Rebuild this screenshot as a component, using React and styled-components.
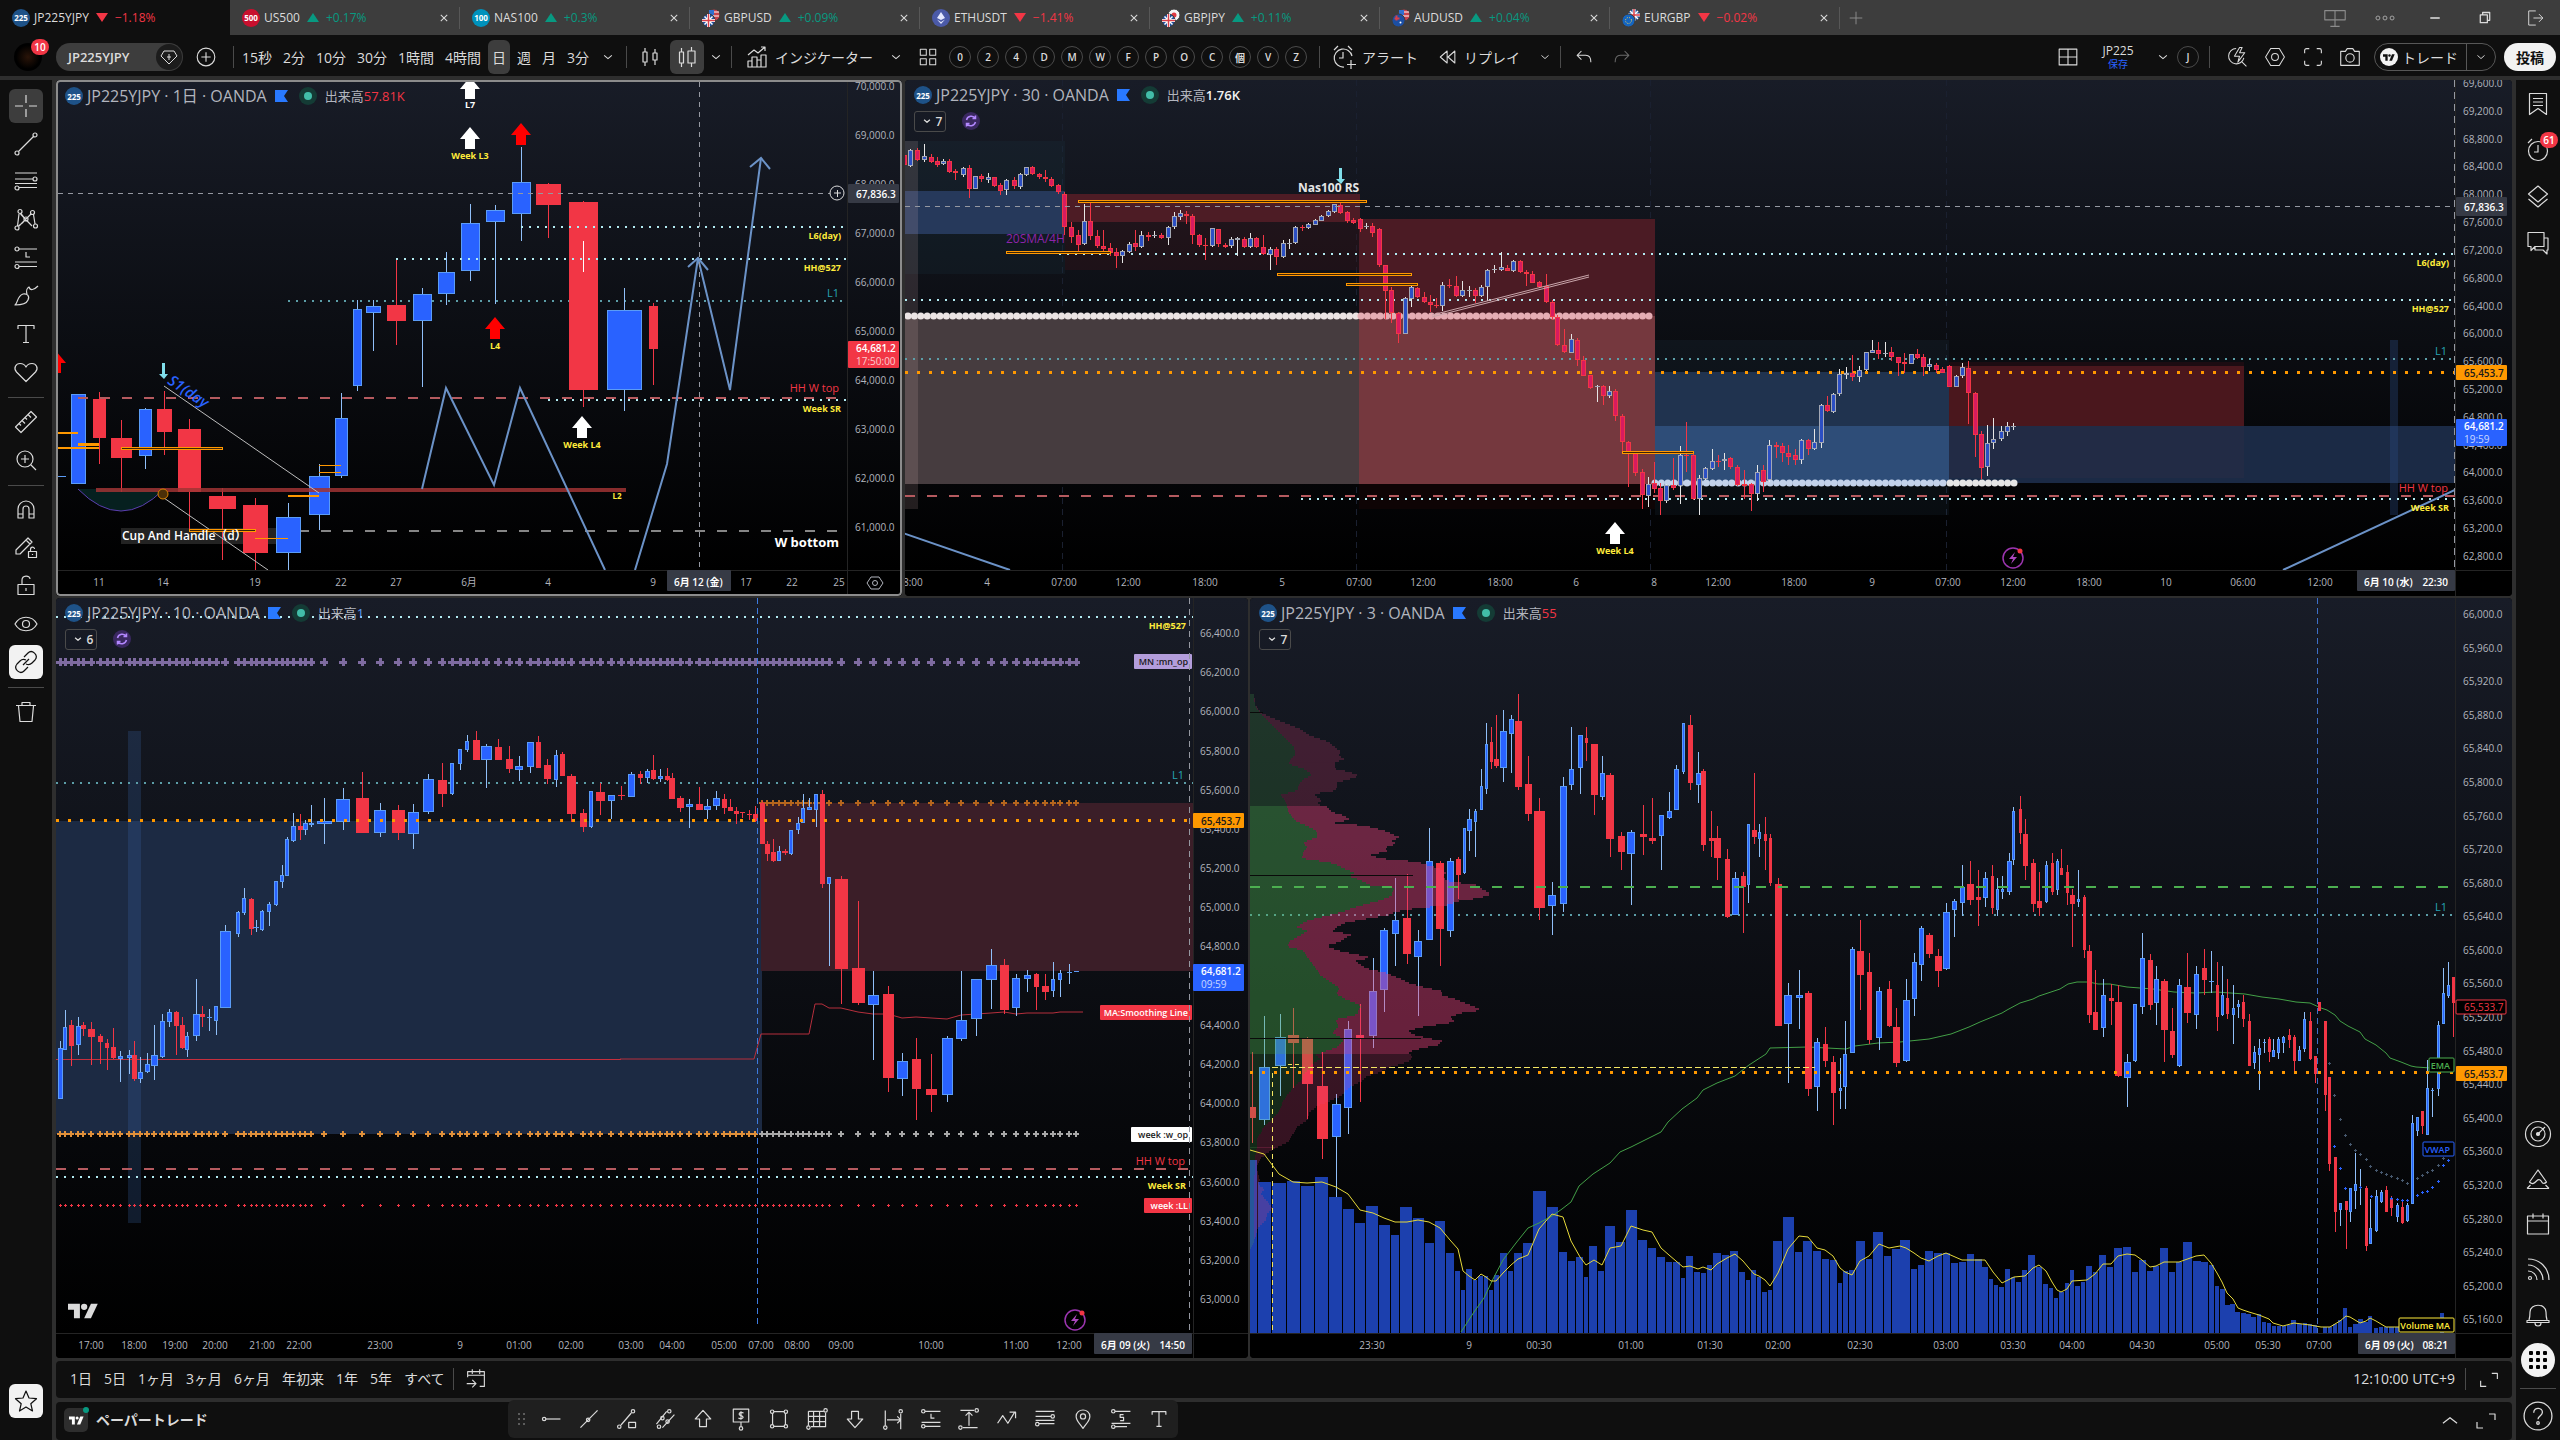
import React from "react";
import styled, { createGlobalStyle, css } from "styled-components";

const FONT = '"Open Sans", "Noto Sans", "Noto Sans CJK JP", sans-serif';
const C = {
  bar: "#0f0f0f", gap: "#2e2e2e", raised: "#3d3d3d", line: "#4a4a4a", text: "#dbdbdb",
  muted: "#b2b5be", up: "#2962ff", upEdge: "#5b9cf6", upWick: "#90bff9", down: "#f23645",
  orange: "#ff9800", yellow: "#ffeb3b", teal: "#26a6b5", dot: "#b2ebf2", dim: "#5c9ea8",
};

const Global = createGlobalStyle`
  * { box-sizing: border-box; }
  body { margin: 0; background: ${C.gap}; font-family: ${FONT}; color: ${C.text}; overflow: hidden; }
  button { font: inherit; color: inherit; background: none; border: 0; padding: 0; margin: 0; cursor: pointer; }
  h2, p { margin: 0; font-weight: 400; }
`;

/* ---------- icons ---------- */
const dot = (x, y) => <circle cx={x} cy={y} r="2" key={`${x}-${y}`} />;
const ICONS = {
  cross: <path d="M14 3v8M14 17v8M3 14h8M17 14h8" />,
  trend: <><path d="M6.5 21.5 21.5 6.5" />{dot(5, 23)}{dot(23, 5)}</>,
  fib: <><path d="M3 5h22M3 11h18M7 19.500h18M3 15.500h22" />{dot(23, 11)}{dot(5, 20)}</>,
  pattern: <><path d="M5.500 20 7 8M8.500 8 20 20M7 20 19 8M21.500 8.500l1.500 9.500M9 7.500l3.500 4.500M6.500 20l5-4" />{dot(8, 5.500)}{dot(5, 22)}{dot(20.500, 6.500)}{dot(23.500, 20)}{dot(14, 13)}</>,
  proj: <><path d="M7 5h18M14 8v5h4M3 18h22M7 22.500h18" />{dot(5, 5)}{dot(5, 22.500)}</>,
  shortp: <><path d="M7 5h18M17 9h-4v3h4v4h-4M3 19h22M7 23h14" />{dot(5, 5)}{dot(5, 23)}</>,
  brush: <path d="M3 23c3-2 2-9 8-11 4-1 7 2 5 6-2 5-9 5-13 5zM15 12c-1-3 0-6 2-7 1 4 5 3 9-1" />,
  text: <path d="M6 9V5.500h16V9M14 5.500v17M11 22.500h6" />,
  heart: <path d="M14 23.500 4.500 14C1 10 4 5.500 8 5.500c3 0 5 1.500 6 3.500 1-2 3-3.500 6-3.500 4 0 7 4.500 3.500 8.500z" />,
  ruler: <path d="M3.500 19 19 3.500l5.500 5.500L9 24.500zM7 15.500l2 2M10 12.500l3 3M13 9.500l2 2M16 6.500l3 3" />,
  zoomin: <path d="M13 5a8 8 0 1 1 0 16 8 8 0 0 1 0-16zM19 19l5 5M9 13h8M13 9v8" />,
  magnet: <path d="M6 22V13a8 8 0 0 1 16 0v9h-5v-9a3 3 0 0 0-6 0v9zM6 18h5M17 18h5" />,
  pencillock: <path d="M4 20v-4L16 4l4 4L8 20zM14 6l4 4M16.500 17.500h8v6h-8zM18.500 17.500v-2c0-3 4-3 4-.500M20.500 20v1" />,
  lock: <path d="M6 12.500h16v10H6zM10 12.500V8c0-5 8-5 8-1M14 16v3" />,
  eye: <><path d="M3 14c5-9 17-9 22 0-5 9-17 9-22 0z" /><circle cx="14" cy="14" r="3.500" /></>,
  link: <path d="M12 9l4-4c4-4 11 2 7 7l-3 3c-2 2-4 2-6 1M16 19l-4 4c-4 4-11-2-7-7l3-3c2-2 4-2 6-1M11 17l6-6" />,
  trash: <path d="M4 7.500h20M10 7V4.500h8V7M6.500 8l1.500 15.500h12L21.500 8" />,
  star: <path d="m14 4 3 7 7.500.700-5.700 5 1.700 7.300-6.500-4-6.500 4 1.700-7.300-5.700-5L11 11z" />,
  list: <path d="M5.500 3.500h17v21l-8.500-6-8.500 6zM9 8.500h10M9 12h10M9 15.500h10" />,
  clock: <><circle cx="14" cy="15" r="9.500" /><path d="M14 9v7h-4M4 7l4-4M20 3l4 4" /></>,
  layers: <path d="m14 4 9.500 8-9.500 8-9.500-8zM4.500 17l9.500 8 9.500-8" />,
  chat: <path d="M4 4.500h16v14h-9l-4 4v-4H4zM20 10h4v12h-1v4l-4-4h-8v-3" />,
  radar: <><circle cx="14" cy="14" r="12.500" /><circle cx="14" cy="14" r="7" /><circle cx="14" cy="14" r="1.500" fill="currentColor" /><path d="m15 13 6-6" /></>,
  peak: <path d="M3 23.500h22M6.500 20 3 23.500M21.500 20l3.500 3.500M14 5 5.500 17c3 3 5 1 7-1s4-2 6 2c2 1 3 0 4-1zM5.500 17" />,
  calendar: <path d="M3.500 6h21v18h-21zM3.500 11h21M9 3.500v5M19 3.500v5" />,
  feed: <><path d="M4 4c12 0 21 9 21 21M4 10c8 0 15 7 15 15M4 16c5 0 9 4 9 9" /><circle cx="6" cy="23" r="1.500" /></>,
  bell: <path d="M5 20c1-3 1-5 1-8 0-9 16-9 16 0 0 3 0 5 1 8M3 20.500h22v2H3zM11 23c0 4 6 4 6 0" />,
  help: <><circle cx="14" cy="14" r="13" /><path d="M10 11c0-6 9-5 8 0-.500 3-4 3-4 6" /><circle cx="14" cy="20.500" r="1.200" /></>,
  plus: <path d="M14 6v16M6 14h16" />,
  pluscircle: <><circle cx="14" cy="14" r="9.500" /><path d="M14 9v10M9 14h10" /></>,
  chevron: <path d="m9.500 12 4.500 4 4.500-4" />,
  chevup: <path d="m5 18 9-7 9 7" />,
  close: <path d="m9 9 10 10M19 9 9 19" />,
  bars: <path d="M7 9h4v10H7zM9 5v4M9 19v4M17 10h4v7h-4zM19 6v4M19 17v5" />,
  candle2: <path d="M6.500 9h4v11h-4zM8.500 5v4M8.500 20v4M15 8h7v12h-7zM18.500 4v4M18.500 20v4" />,
  indicator: <path d="M5 12l6-5 4 3 7-6M18 4h4v4M5 24v-6h4v-4h5v3h4v-5h5v12zM9 18v6M14 17v7M18 16v8" />,
  grid: <path d="M5 5h7v7H5zM16 5h7v7h-7zM5 16h7v7H5zM16 16h7v7h-7z" />,
  alert: <path d="M22 13a9 9 0 1 0-8 11M13 9v6H9M4 7l4-4M18 3l4 4M21 17v9M17 21.500h9" />,
  rewind: <path d="M13 7v14l-8-7zM22 7v14l-8-7z" />,
  undo: <path d="m11 7-5 5 5 5M6 12h10c4 0 6 3 6 8" />,
  redo: <path d="m17 7 5 5-5 5M22 12H12c-4 0-6 3-6 8" />,
  layout: <path d="M4.500 5.500h19v17h-19zM14 5.500v17M4.500 14h19" />,
  flashsearch: <path d="M13 4a9 9 0 1 0 9 11M20 20l5 5M17 3l-6 10h6l-2 7 8-11h-6l3-6z" />,
  hex: <><path d="M9 4h10l6 10-6 10H9L3 14z" /><circle cx="14" cy="14" r="4" /></>,
  full: <path d="M10 5H7a2 2 0 0 0-2 2v3M18 5h3a2 2 0 0 1 2 2v3M10 23H7a2 2 0 0 1-2-2v-3M18 23h3a2 2 0 0 0 2-2v-3" />,
  camera: <><path d="M4 8h5l2-3h6l2 3h5v15H4z" /><circle cx="14" cy="15" r="4.500" /></>,
  monitor: <path d="M3 6h22v10H3zM14 6v17M9 23h10" />,
  dots3: <><circle cx="5" cy="14" r="2.500" /><circle cx="14" cy="14" r="2.500" /><circle cx="23" cy="14" r="2.500" /></>,
  minus: <path d="M8 14h12" strokeWidth="2" />,
  restore: <path d="M8 10h9v10H8zM11 10V7h9v10h-3" />,
  exit: <path d="M15 5H6v18h9M12 14h12M19 9l5 5-5 5" />,
  expand: <path d="M17 8h6v6M5 16v6h6" />,
  goto: <path d="M5 12V6h18v16h-5M5 10h18M10 3.500v5M18 3.500v5M4 19h10M10 15l4 4-4 4" />,
  hray: <><path d="M8 14h17" />{dot(6, 14)}</>,
  line2: <><path d="M4 24 24 4" />{dot(13, 15)}</>,
  rotbox: <><path d="M7 21 19 7M16 18h8v6h-8z" />{dot(5, 23)}{dot(21, 5)}</>,
  channel: <><path d="M4 20 16 5M11 24 25 9" />{dot(19, 5)}{dot(7, 23)}{dot(11, 13)}{dot(17, 17)}</>,
  up: <path d="m14 4 9 10h-5v9h-8v-9H5z" />,
  down: <path d="m14 24 9-10h-5V5h-8v9H5z" />,
  note: <><path d="M5 2.500h18v15H5zM17 7c-5-2-7 2-3 3s3 5-3 3M14 5v10M14 17.500v5" />{dot(14, 25)}</>,
  rect: <><path d="M6.500 8v12M21.500 8v12M8 5.500h12M8 22.500h12" />{dot(6, 5.500)}{dot(22, 5.500)}{dot(6, 22.500)}{dot(22, 22.500)}</>,
  table: <><path d="M4 5h18M4 5v17M7 23h17V7M4 11h20M4 17h20M10 5v18M17 5v18" />{dot(24, 4)}{dot(4, 24)}</>,
  hrange: <><path d="M5 4v18M23 8v18M7 15h16M19 11l4 4-4 4" />{dot(5, 24)}{dot(23, 5)}</>,
  vrange: <><path d="M7 24h17M4 4h16M14 6v16M10 10l4-4 4 4" />{dot(4, 24)}{dot(23, 4)}</>,
  zig: <path d="m3 19 6-9 6 9 8-13M17 6h7v7" />,
  pin: <><path d="M14 25c-4-6-8-9-8-14 0-10 16-10 16 0 0 5-4 8-8 14z" /><circle cx="14" cy="11" r="3" /></>,
};
const IconSvg = styled.svg.attrs({ viewBox: "0 0 28 28", "aria-hidden": true })`
  width: ${(p) => p.$s}px; height: ${(p) => p.$s}px; flex: none; display: block;
  fill: none; stroke: currentColor; stroke-width: ${(p) => p.$w || 1.2}; stroke-linejoin: round;
`;
const Icon = ({ n, s = 28, w }) => <IconSvg $s={s} $w={w}>{ICONS[n]}</IconSvg>;

const TvLogo = ({ w = 30, color = "#dbdbdb" }) => (
  <svg width={w} height={Math.round(w * 0.6)} viewBox="0 0 36 21" fill={color} aria-hidden="true">
    <path d="M0 1h14v19H7V8H0z" /><circle cx="19.500" cy="4.500" r="3.700" /><path d="M27 1h8l-8 19h-8z" />
  </svg>
);

/* ---------- tab strip ---------- */
const Tabs = styled.nav`display: flex; height: 35px; background: ${C.raised};`;
const Tab = styled.div`
  width: 230px; display: flex; align-items: center; gap: 4px; padding: 0 6px 0 12px; font-size: 12px; color: ${C.text};
  background: ${(p) => (p.$on ? C.bar : "transparent")};
  position: relative;
  ${(p) => (p.$on ? "" : css`&::after { content: ""; position: absolute; right: 0; top: 7px; height: 22px; width: 1px; background: #575757; }`)}
`;
const TabLink = styled.a`display: flex; align-items: center; gap: 4px; flex: 1; color: inherit; text-decoration: none; white-space: nowrap;`;
const Pct = styled.span`color: ${(p) => (p.$up ? "#089981" : C.down)};`;
const Tri = styled.span`
  width: 0; height: 0; border: 6px solid transparent; margin: 0 3px;
  ${(p) => (p.$up ? "border-bottom: 9px solid #089981; border-top: 0;" : `border-top: 9px solid ${C.down}; border-bottom: 0;`)}
`;
const Coin = styled.span`
  width: 18px; height: 18px; border-radius: 9px; flex: none; display: grid; place-items: center; color: #fff;
  font-size: 8px; font-weight: 700; background: ${(p) => p.$bg};
`;
const flagColors = {
  GB: ["#1f4f9c", "#d8404a", "#fff"], US: ["#c8414b", "#2f6fd0", "#fff"], JP: ["#f5f5f5", "#e03a44", "#f5f5f5"],
  AU: ["#1c4fa3", "#d8404a", "#fff"], EU: ["#1565c0", "#ffd54f", "#1565c0"],
};
const Flag = ({ c, x, y, r }) => {
  const [bg, a, b] = flagColors[c];
  return (
    <g>
      <circle cx={x} cy={y} r={r} fill={bg} stroke={C.raised} />
      {c === "GB" && <><path d={`M${x - 4} ${y - 4}l8 8m0-8-8 8`} stroke={b} strokeWidth="1.500" /><path d={`M${x} ${y - r}v${2 * r}M${x - r} ${y}h${2 * r}`} stroke={b} strokeWidth="3" /><path d={`M${x} ${y - r}v${2 * r}M${x - r} ${y}h${2 * r}`} stroke={a} strokeWidth="1.500" /></>}
      {c === "US" && <><path d={`M${x - 5} ${y - 3}h10M${x - 5} ${y + 1}h10`} stroke={b} /><rect x={x - 5} y={y - 5} width="5" height="5" fill={a} /></>}
      {c === "JP" && <circle cx={x} cy={y} r="2.500" fill={a} />}
      {c === "AU" && <><path d={`M${x - 4} ${y - 2}h5M${x - 2} ${y - 5}v5`} stroke={a} strokeWidth="2" /><circle cx={x + 2} cy={y + 2} r="1" fill={b} /></>}
      {c === "EU" && <circle cx={x} cy={y} r="3" fill="none" stroke={a} strokeDasharray="1 1.400" />}
    </g>
  );
};
const Pair = ({ a, b }) => (
  <svg width="18" height="18" viewBox="0 0 18 18" aria-hidden="true"><Flag c={b} x={12} y={6} r={6} /><Flag c={a} x={6.500} y={11.500} r={6.500} /></svg>
);
const Spacer = styled.div`flex: 1;`;
const StripBtn = styled.button`width: ${(p) => p.$w || 50}px; display: grid; place-items: center; color: ${(p) => p.$c || C.text};`;
const tabs = [
  ["JP225YJPY", "−1.18%", 0, <Coin $bg="#1e5288">225</Coin>],
  ["US500", "+0.17%", 1, <Coin $bg="#c8102e">500</Coin>],
  ["NAS100", "+0.3%", 1, <Coin $bg="#0092bc">100</Coin>],
  ["GBPUSD", "+0.09%", 1, <Pair a="GB" b="US" />],
  ["ETHUSDT", "−1.41%", 0, <Coin $bg="#4b5aa8"><svg width="8" height="12" viewBox="0 0 8 12"><path d="m4 0 4 6-4 2-4-2zM0 7.500 4 10l4-2.500L4 12z" fill="#e4e8ff" /></svg></Coin>],
  ["GBPJPY", "+0.11%", 1, <Pair a="GB" b="JP" />],
  ["AUDUSD", "+0.04%", 1, <Pair a="AU" b="US" />],
  ["EURGBP", "−0.02%", 0, <Pair a="EU" b="GB" />],
];

/* ---------- top toolbar ---------- */
const Bar = styled.header`
  height: 41px; display: flex; align-items: center; background: ${C.bar}; font-size: 14px; white-space: nowrap; padding: 3px 4px 0 0;
`;
const Sep = styled.span`width: 1px; height: 22px; background: ${C.line}; margin: 0 ${(p) => p.$m || 6}px; flex: none;`;
const Avatar = styled.div`
  width: 56px; height: 40px; position: relative; display: grid; place-items: center;
  &::before { content: ""; width: 28px; height: 28px; border-radius: 14px; background: radial-gradient(#2a1408, #000 60%); }
`;
const Badge = styled.b`
  position: absolute; top: ${(p) => p.$t}px; right: ${(p) => p.$r}px; min-width: 18px; height: 16px; padding: 0 3px; border-radius: 8px;
  background: ${C.down}; color: #fff; font-size: 10px; font-weight: 600; line-height: 16px; text-align: center;
`;
const Symbol = styled.button`
  height: 28px; width: 127px; border-radius: 14px; background: ${C.raised}; display: flex; align-items: center; justify-content: space-between;
  padding: 0 1px 0 12px; font-weight: 600; font-size: 13px;
  & > span { width: 26px; height: 26px; border-radius: 13px; background: #1c1c1c; display: grid; place-items: center; }
`;
const Tool = styled.button`
  height: 34px; min-width: ${(p) => p.$w || 0}px; padding: 0 ${(p) => p.$p || 0}px; border-radius: 6px; display: flex; align-items: center; justify-content: center;
  gap: 4px; color: ${(p) => p.$c || C.text}; background: ${(p) => (p.$on ? C.raised : "none")};
`;
const Intervals = styled.div`display: flex; gap: 3px; font-size: 14px;`;
const Round = styled.button`
  width: 22px; height: 22px; border-radius: 11px; border: 1px solid #4a4a4a; font-size: 10px; font-weight: 600; display: grid; place-items: center; flex: none;
`;
const Rounds = styled.div`display: flex; gap: 6px; padding: 0 6px 0 4px;`;
const Saved = styled.div`text-align: center; font-size: 12px; line-height: 14px; width: 62px; & small { display: block; font-size: 10px; line-height: 12px; color: ${C.up}; }`;
const Trade = styled.div`
  height: 28px; width: 122px; border: 1px solid #575757; border-radius: 14px; display: flex; align-items: center; margin: 0 8px 0 4px;
  button { display: flex; align-items: center; justify-content: center; gap: 4px; height: 26px; }
  button:first-child { flex: 1; justify-content: flex-start; padding-left: 5px; border-right: 1px solid #575757; }
  button:last-child { width: 28px; }
`;
const Disc = styled.span`width: 18px; height: 18px; border-radius: 9px; background: #f2f2f2; display: grid; place-items: center;`;
const Post = styled.button`height: 28px; width: 52px; border-radius: 14px; background: #f2f2f2; color: #0f0f0f; font-weight: 600;`;

/* ---------- body frame ---------- */
const Page = styled.div`display: flex; flex-direction: column; height: 100vh; min-height: 900px;`;
const Body = styled.div`display: grid; grid-template-columns: 52px minmax(0, 1fr) 44px; gap: 4px; flex: 1; min-height: 0; padding-top: 4px;`;
const Side = styled.aside`background: ${C.bar}; display: flex; flex-direction: column; align-items: center; padding: ${(p) => p.$pad}; min-height: 0;`;
const SideBtn = styled.button`
  width: 34px; height: ${(p) => p.$h || 38}px; display: grid; place-items: center; position: relative; flex: none;
  & > span {
    width: 34px; height: 34px; border-radius: ${(p) => (p.$disc ? 17 : 6)}px; display: grid; place-items: center;
    background: ${(p) => (p.$lit ? "#f2f2f2" : p.$on ? C.raised : "none")}; color: ${(p) => (p.$lit ? "#0f0f0f" : C.text)};
  }
`;
const SideLine = styled.hr`width: 36px; height: 1px; border: 0; background: ${C.line}; margin: ${(p) => p.$m || 6}px 0; margin-bottom: ${(p) => (p.$m || 6) - 1}px; flex: none;`;
const Center = styled.main`display: flex; flex-direction: column; gap: 4px; min-width: 0; min-height: 0;`;
const Charts = styled.div`flex: 1; display: grid; grid-template-rows: 516fr 760fr; gap: 2px; min-height: 0; margin-bottom: -1px;`;
const Row = styled.div`display: grid; grid-template-columns: ${(p) => p.$cols}; gap: ${(p) => p.$gap}px; min-height: 0;`;
const Panel = styled.section`
  position: relative; min-width: 0; min-height: 0; border-radius: 4px; overflow: hidden; background: #000;
  ${(p) => (p.$on ? css`&::after { content: ""; position: absolute; inset: 0; border: 2px solid #8c8c8c; border-radius: 4px; pointer-events: none; }` : "")}
`;
const Plot = styled.svg.attrs({ preserveAspectRatio: "none" })`position: absolute; inset: 0; width: 100%; height: 100%; display: block; font-family: ${FONT};`;
const Legend = styled.div`position: absolute; left: 9px; top: ${(p) => p.$t}px; display: grid; gap: 6px;`;
const LegendRow = styled.div`display: flex; align-items: center; height: 20px; white-space: nowrap;`;
const Title = styled.h2`font-size: 16px; line-height: 20px; color: ${C.muted}; margin: 0 8px 0 4px;`;
const Live = styled.span`width: 18px; height: 18px; border-radius: 9px; background: #143b35; display: grid; place-items: center; margin: 0 8px 0 11px; &::after { content: ""; width: 8px; height: 8px; border-radius: 4px; background: #42bda8; }`;
const Vol = styled.p`font-size: 13px; line-height: 18px; color: ${C.muted}; & b { font-weight: ${(p) => (p.$bold ? 600 : 400)}; color: ${(p) => p.$c}; }`;
const Count = styled.button`width: 32px; height: 21px; border: 1px solid ${C.line}; border-radius: 3px; display: flex; align-items: center; justify-content: center; font-size: 12px; font-weight: 600;`;
const Sync = styled.span`width: 18px; height: 18px; border-radius: 9px; background: #3a2860; color: #b388ff; display: grid; place-items: center; margin-left: 16px;`;

const Footer = styled.div`height: ${(p) => p.$h}px; background: ${C.bar}; border-radius: 4px; display: flex; align-items: center; font-size: 14px; line-height: 20px; padding: 0 10px 2px 8px; flex: none; white-space: nowrap;`;
const Ranges = styled.div`display: flex; gap: 12px; padding: 0 4px 0 6px;`;
const Paper = styled.button`display: flex; align-items: center; gap: 8px; font-weight: 600; position: relative;`;
const PaperLogo = styled.span`width: 24px; height: 24px; border-radius: 5px; background: ${C.gap}; display: grid; place-items: center; position: relative; &::after { content: ""; position: absolute; right: -1px; top: -1px; width: 6px; height: 6px; border-radius: 3px; background: #089981; }`;
const Float = styled.div`
  position: absolute; left: 508px; bottom: 2px; height: 38px; width: 670px; border-radius: 6px; background: #1f1f1f; display: flex; align-items: center; padding-left: 4px;
  button { width: 38px; height: 38px; display: grid; place-items: center; }
`;
const Grip = styled.span`width: 20px; height: 14px; background: radial-gradient(circle at 2px 2px, #5c5c5c 1px, transparent 1px) 5px 0 / 5px 5px repeat; clip-path: inset(0 5px 0 5px);`;

/* ---------- chart primitives ---------- */
/* maps sheet units to panel pixels: origin plus units per pixel on each axis */
const sheet = (x0, y0, kx, ky) => ({ x: (v) => Math.round(x0 + v / kx), y: (v) => Math.round(y0 + v / ky), k: kx });
const S1 = sheet(0, 80, 1.7231, 3);
const S2 = sheet(900, 80, 1.8233, 3);
const S2b = sheet(1700, 80, 1.8233, 3);
const S3 = sheet(0, 600, 2.45, 2.0632);
const S3b = sheet(620, 600, 2.45, 2.0632);
const S4 = sheet(1240, 600, 2.3758, 2.0632);
const S4b = sheet(1900, 600, 2.3758, 2.0632);

/* candle record: centre, width, body top, body bottom, high, low, direction */
const candles = (s, src, w0) =>
  src.trim().split(/[;\n]+/).map((r) => r.trim()).filter(Boolean).map((r) => {
    const p = r.split(/\s+/);
    if (w0) p.splice(1, 0, w0);
    const cx = s.x(+p[0]);
    return { cx, w: Math.max(3, Math.round(+p[1] / s.k)), t: s.y(+p[2]), b: s.y(+p[3]), h: s.y(+p[4]), l: s.y(+p[5]), up: p[6] === "b" };
  });
const themes = {
  plain: { up: C.up, upEdge: C.upEdge, upWick: C.upWick, down: C.down, downEdge: C.down, downWick: C.down },
  night: { up: "#2c4fc4", upEdge: "#a3a8b5", upWick: "#e6e6e6", down: "#d81b60", downEdge: C.down, downWick: C.down },
};
const Candles = ({ data, theme = "plain" }) => {
  const t = themes[theme];
  return (
    <g shapeRendering="crispEdges">
      {data.map((c, i) => {
        const x = c.cx - Math.floor(c.w / 2);
        const h = Math.max(1, c.b - c.t);
        return (
          <g key={i}>
            <rect x={c.cx} y={c.h} width="1" height={Math.max(1, c.l - c.h)} fill={c.up ? t.upWick : t.downWick} />
            <rect x={x} y={c.t} width={c.w} height={h} fill={c.up ? t.upEdge : t.downEdge} />
            {c.w > 2 && h > 2 && <rect x={x + 1} y={c.t + 1} width={c.w - 2} height={h - 2} fill={c.up ? t.up : t.down} />}
          </g>
        );
      })}
    </g>
  );
};
const poly = (s, src) => src.trim().split(/\s+/).map((p) => { const [a, b] = p.split(","); return `${s.x(+a)},${s.y(+b)}`; }).join(" ");
const H = ({ x1, x2, y, c, d, w = 1, o }) => <line x1={x1} x2={x2} y1={y + (w % 2 ? 0.5 : 0)} y2={y + (w % 2 ? 0.5 : 0)} stroke={c} strokeWidth={w} strokeDasharray={d} opacity={o} />;
const V = ({ x, y1, y2, c, d }) => <line x1={x + 0.5} x2={x + 0.5} y1={y1} y2={y2} stroke={c} strokeDasharray={d} />;
const Box = ({ x1, y1, x2, y2, f, o, st }) => <rect x={x1} y={y1} width={x2 - x1} height={y2 - y1} fill={f} opacity={o} stroke={st} shapeRendering="crispEdges" />;
const Band = ({ x1, x2, y }) => <rect x={x1 + 0.5} y={y + 0.5} width={x2 - x1} height="2" fill="#3a2408" stroke={C.orange} />;
const Cross = ({ x, y, r, w, c }) => <path d={`M${x - r} ${y}h${2 * r}M${x} ${y - r}v${2 * r}`} stroke={c} strokeWidth={w} shapeRendering="crispEdges" />;

const Tick = styled.text`font-size: 10px; fill: #b2b5be; text-anchor: ${(p) => p.$a || "start"}; dominant-baseline: central;`;
const Note = styled.text`
  font-size: ${(p) => p.$s || 9}px; font-weight: ${(p) => p.$w || 700}; fill: ${(p) => p.$c || C.yellow}; font-style: ${(p) => (p.$i ? "italic" : "normal")};
  text-anchor: ${(p) => p.$a || "end"}; dominant-baseline: central;
`;
const Arrow = ({ x, y, c }) => <path d={`M${x} ${y}l10 12h-5v10h-10v-10h-5z`} fill={c} />;
const CyanArrow = ({ x, y }) => <path d={`M${x - 1} ${y}h3v11h3l-4 5-5-5h3z`} fill="#80deea" />;
const TimeTicks = ({ s, y, src }) => src.split(" ").map((t, i) => { const [l, x] = t.split("@"); return <Tick key={i} $a="middle" x={s.x(+x)} y={y}>{l}</Tick>; });
const PriceTicks = ({ x, y, step, from, by, n }) =>
  Array.from({ length: n }, (_, i) => <Tick key={i} x={x} y={Math.round(y + step * i)}>{(from - by * i).toLocaleString("en-US")}.0</Tick>);
const AxisTag = ({ x, y, w, h, f, lines, c = "#fff", st }) => (
  <g>
    <rect x={x} y={y} width={w} height={h} rx="1" fill={f} stroke={st} />
    {lines.map((l, i) => <Note key={l} $a="start" $s={10} $w={st || i ? 400 : 600} $c={i ? "#ffffffc0" : c} x={x + 8} y={Math.round(y + (h / lines.length) * (i + 0.5))}>{l}</Note>)}
  </g>
);
const TimeTag = ({ x, y, w, a, b }) => (
  <g>
    <rect x={x} y={y} width={w} height="21" rx="1" fill="#363a45" />
    <Note $a="start" $s={10} $w={600} $c="#fff" x={x + 7} y={y + 12}>{a}</Note>
    {b && <Note $s={10} $w={600} $c="#fff" x={x + w - 7} y={y + 12}>{b}</Note>}
  </g>
);
const Tag = ({ x2, y, w, f, c, st, children }) => (
  <g><rect x={x2 - w} y={y} width={w} height={st ? 14 : 15} rx="1" fill={f} stroke={st} /><Note $s={9} $w={600} $c={c} x={x2 - 4} y={y + 7}>{children}</Note></g>
);
const Flash = ({ x, y }) => (
  <g><circle cx={x} cy={y} r="10" fill="#000" stroke="#9c35b0" strokeWidth="1.500" /><path d={`M${x + 2} ${y - 6}l-6 7h4l-2 5 6-7h-4z`} fill="#ab47bc" /><circle cx={x + 7} cy={y - 7} r="2.500" fill={C.down} /></g>
);
const Ground = ({ id, x, y, w, h, axisX, axisY }) => (
  <g>
    <defs><linearGradient id={id} x1="0" x2="0" y1="0" y2="1"><stop offset="0" stopColor="#181c27" /><stop offset="1" stopColor="#000" /></linearGradient></defs>
    <rect x={x} y={y} width={w} height={axisY - y} fill={`url(#${id})`} />
    <rect x={x} y={axisY} width={w} height={y + h - axisY} fill="#000" />
    <H x1={x} x2={x + w} y={axisY} c="#242424" /><V x={axisX} y1={y} y2={y + h} c="#242424" />
  </g>
);

/* ---------- data ---------- */
const day = candles(S1, `135 26 942 1211 942 1211 b;170 22 957 1074 936 1152 r;209 36 1074 1134 1020 1236 r;249 22 987 1128 984 1167 b;282 26 987 1056 933 1125 r
325 40 1047 1236 1017 1353 r;382 47 1248 1287 1224 1440 r;440 43 1275 1418 1254 1470 r;497 43 1311 1418 1269 1470 b;549 36 1188 1305 1152 1350 b
588 23 1014 1187 939 1194 b;616 16 687 917 660 933 b;643 25 678 699 660 813 b;683 33 675 723 537 795 r;728 32 642 722 624 921 b
769 30 576 641 516 675 b;810 33 429 573 372 603 b;853 33 390 426 375 672 b;897 33 306 402 201 483 b;945 43 312 375 309 474 r
1004 50 366 930 363 981 r;1076 60 690 930 624 993 b;1126 16 678 807 669 915 r`);

const half = [
  ...candles(S2, `7 225 255 222 257 r;19 210 258 207 261 b;31 210 240 204 243 r;43 229 239 192 246 b;56 230 245 222 249 r;67 244 255 231 261 r;78 243 253 237 256 b;90 243 276 238 278 r;101 274 280 268 300 r
114 264 285 262 292 b;125 265 326 255 354 r;136 289 326 288 327 b;148 289 298 283 305 r;160 292 299 280 310 b;172 291 317 290 320 r;183 316 332 310 345 r;194 301 331 296 345 b;207 300 319 292 327 r;218 283 320 279 326 b
230 262 285 261 287 b;241 262 283 258 286 r;253 283 292 280 298 r;265 292 298 270 305 r;276 298 317 290 320 r;288 316 335 312 342 r;299 343 440 335 465 r;312 440 470 426 490 r;324 466 494 450 520 r;335 423 493 372 496 b
347 423 469 368 480 r;359 469 497 450 505 r;371 497 507 450 515 r;382 503 520 490 527 r;393 515 527 505 564 r;405 514 527 510 549 b;417 492 515 486 520 b;429 490 500 450 513 r;440 466 500 452 503 b;452 466 470 455 483 r
464 465 468 452 475 b;476 466 475 458 478 r;488 441 473 438 496 b;499 409 440 396 448 b;510 400 412 391 420 b;522 402 409 393 432 r;533 409 466 402 492 r;545 464 496 462 500 r;557 494 497 475 540 r;568 445 497 443 500 b
580 447 493 446 500 r;592 494 501 490 505 r;604 477 499 470 503 b;615 475 479 470 528 b;627 478 500 470 504 r;639 474 501 458 503 b;650 474 500 470 505 r;662 500 521 465 524 r;674 508 525 502 570 b;686 508 530 501 555 r
698 488 530 480 533 b;709 488 490 476 507 b;721 442 490 438 493 b;733 440 444 436 452 r;744 433 445 430 448 b;756 421 434 418 436 b;768 408 422 405 424 b;780 393 409 390 412 b;791 373 395 371 398 b;803 374 399 370 402 r
815 396 424 393 430 r;826 419 429 415 431 r;838 417 446 414 455 r;849 438 441 430 447 b;861 438 458 430 471 r;873 447 556 444 560 r;884 556 632 554 716 r;896 630 700 620 730 r;908 700 761 697 789 r;920 655 761 650 763 b
931 622 656 612 680 b;943 624 652 620 655 r;955 652 667 637 670 r;966 665 676 645 697 r;978 676 679 655 683 r;989 615 679 606 692 b;1001 615 619 597 625 r;1013 618 647 588 652 r;1024 631 647 603 650 b;1037 629 633 617 652 b
1048 630 647 625 670 r;1060 621 647 615 650 b;1071 571 622 568 663 b;1083 568 571 556 580 b;1095 562 569 516 572 b;1106 563 572 555 574 r;1118 542 573 540 577 b;1130 543 577 540 580 r;1141 576 583 570 618 r;1153 582 608 573 610 r
1165 606 622 602 625 r;1177 618 667 583 670 r;1188 667 710 660 720 r;1198 710 796 704 798 r;1211 796 817 747 820 r;1223 778 818 762 820 b;1235 779 841 775 858 r;1246 841 887 828 889 r;1258 886 923 884 926 r;1270 919 922 915 966 b
1281 919 947 915 975 r;1293 934 947 919 954 b;1304 934 1009 928 1023 r;1317 1009 1085 1002 1120 r;1328 1085 1119 1083 1220 r;1340 1119 1179 1113 1187 r;1352 1177 1244 1168 1286 r;1363 1213 1247 1190 1280 b;1375 1208 1226 1145 1238 r
1386 1224 1262 1210 1305 r;1397 1215 1262 1212 1270 b;1410 1215 1225 1134 1230 r;1422 1126 1218 1098 1272 b;1434 1124 1129 1026 1175 r;1445 1126 1257 1118 1260 r;1456 1194 1256 1185 1305 b;1468 1164 1196 1160 1200 b
1480 1143 1166 1108 1170 b;1492 1142 1147 1124 1162 r;1503 1137 1144 1120 1170 b;1514 1134 1162 1130 1166 r;1527 1160 1215 1156 1218 r;1538 1213 1217 1170 1257 r;1551 1213 1242 1208 1293 r;1562 1176 1242 1155 1262 b`, "9"),
  ...candles(S2b, `115 1171 1206 1155 1236 r;126 1095 1200 1080 1206 b;138 1096 1100 1086 1134 r;150 1099 1119 1090 1145 r;161 1119 1131 1095 1155 r;174 1125 1140 1108 1155 r;185 1080 1140 1077 1152 b;197 1081 1108 1078 1126 r
208 1087 1107 1047 1110 b;220 975 1090 972 1104 b;232 975 993 948 997 r;243 941 996 938 998 b;254 881 942 866 948 b;267 880 884 862 898 b;278 879 891 825 903 r;290 869 890 857 906 b;302 817 870 815 872 b;313 811 818 780 820 b
325 811 821 787 838 r;337 819 821 785 832 b;349 816 832 800 842 r;361 832 849 830 887 r;372 847 852 820 880 r;384 823 851 821 853 b;395 822 833 806 838 r;407 831 861 822 888 r;418 853 861 838 873 b;430 855 869 848 880 r
442 867 878 860 880 r;454 858 920 855 922 r;466 888 920 885 922 b;477 862 888 850 893 b;489 864 938 843 1032 r;501 940 1064 937 1131 r;512 1063 1163 1054 1197 r;524 1090 1162 1035 1188 b;535 1077 1088 1014 1107 b
548 1053 1077 1037 1083 b;559 1038 1055 1026 1068 b;570 1038 1040 1028 1050 b`, "9"),
];

const ten = [
  ...candles(S3, `146 12 924 1029 910 1029 b;160 11 880 929 846 929 b;175 12 877 920 867 961 r;190 12 878 918 860 939 b;204 12 877 885 870 900 r;224 16 885 902 870 959 r;244 12 900 912 895 957 r;261 11 914 924 906 970 r;278 12 922 945 883 948 r
295 12 941 947 930 994 b;315 12 939 945 928 978 b;329 12 939 988 910 992 r;344 12 974 988 943 997 b;359 12 957 974 935 975 b;378 16 939 961 877 990 b;398 12 869 943 854 944 b;413 12 850 871 844 880 b;430 12 850 879 848 939 r
445 12 877 925 861 926 r;459 11 900 928 891 943 b;479 18 854 900 782 910 b;496 12 854 860 838 880 r;513 12 861 863 844 889 b;528 11 838 869 838 897 b;552 26 683 842 671 842 b;582 11 644 689 642 695 b;599 11 615 646 594 650 b
614 12 617 679 615 691 r;628 14 675 677 660 686 b;643 11 642 681 639 683 b;660 11 627 644 623 673 b;675 11 580 629 580 631 b;690 11 567 582 547 594 b;704 11 493 569 489 570 b;719 12 466 497 439 499 b;734 12 466 475 442 495 r
748 12 461 474 454 485 b;763 12 460 465 423 468 b;795 36 456 463 409 503 b;841 35 411 459 388 474 b;888 32 409 481 355 481 r;932 30 433 481 419 489 b;974 32 433 481 423 495 r;1013 26 437 483 421 514 b;1049 26 369 437 359 442 b
1082 22 371 400 336 427 r;1108 11 336 400 336 402 b;1126 11 307 338 307 351 b;1143 11 291 309 279 314 b;1165 17 289 330 270 331 r;1191 26 301 330 297 388 b;1221 17 303 330 287 330 r;1246 17 328 349 301 356 r;1272 20 342 350 322 374 b
1299 16 293 345 293 357 b;1319 12 293 347 281 347 r;1341 17 340 369 328 380 r;1361 11 320 371 309 386 b;1378 12 318 363 314 363 r;1400 22 363 442 359 458 r;1429 17 439 468 431 479 r;1449 11 394 468 394 470 b;1471 22 396 415 378 444 r
1498 16 402 415 402 452 b;1522 16 402 404 384 413 r;1545 16 359 406 355 406 b`),
  ...candles(S3b, `48 12 359 367 353 380 r;65 12 353 367 349 377 b;82 12 351 369 320 371 r;99 12 363 369 349 375 b;114 12 363 372 347 374 r;128 14 367 411 357 411 r;148 16 409 429 404 437 r;170 16 421 427 411 470 b;193 16 421 433 386 433 r
214 16 425 433 411 452 b;236 16 409 425 394 434 b;256 12 411 429 400 441 r;270 12 427 435 411 436 r;285 12 435 442 427 462 r;300 12 437 439 437 450 r;315 12 441 443 433 454 r;330 12 442 456 425 458 r;347 12 419 503 415 503 r
361 12 503 524 497 538 r;376 12 520 538 493 541 r;390 11 518 538 508 538 b;405 14 518 522 514 526 r;420 11 475 524 475 526 b;435 11 460 475 448 483 b;449 11 429 460 400 460 b;464 12 427 433 408 433 b;479 11 400 433 400 468 b
494 12 400 586 392 594 r;511 11 571 586 571 755 b;542 32 576 761 569 834 r;582 32 759 831 621 836 r;621 26 815 836 765 949 b;657 26 813 986 796 1015 r;692 26 951 988 935 1023 b;726 22 947 1009 904 1073 r;763 26 1009 1021 937 1056 r
800 26 904 1021 900 1036 b;836 26 867 906 765 910 b;873 26 782 864 782 900 b;910 26 753 784 720 844 b;942 22 753 846 741 854 r;969 20 780 842 772 858 b;998 16 774 781 763 809 b;1020 12 772 798 770 846 r;1042 17 796 809 772 825 r
1062 11 782 807 747 819 b;1079 11 770 784 763 819 b;1099 12 767 769 751 792 b;1116 12 765 767 765 767 b`),
];

const three = [
  ...candles(S4, `29 18 1046 1069 933 1121 r;58 26 963 1073 858 1083 b;94 26 902 961 854 1023 b;127 26 897 914 842 1007 r;160 26 906 999 902 1071 r;194 26 1003 1112 933 1153 r;227 22 1040 1108 1019 1232 b;257 20 885 1048 869 1102 b;286 20 897 904 834 1036 r
315 20 807 900 739 924 b;343 20 681 805 677 850 b;369 16 660 689 574 755 b;396 20 656 730 565 751 r;424 20 704 737 681 858 b;450 17 538 701 470 701 b;476 20 543 679 538 755 r;500 16 538 683 532 695 b;517 12 534 567 530 617 r;531 8 470 563 470 565 b
545 11 452 477 431 518 b;559 8 435 458 431 530 b;572 8 384 433 349 433 b;585 7 297 390 254 400 b;597 7 293 334 262 349 r;609 12 328 342 237 347 r;626 16 270 347 227 375 b;645 11 246 276 237 357 b;661 16 250 386 194 391 r;685 16 380 442 322 456 r
711 26 435 635 409 660 r;742 20 609 631 582 691 b;768 16 384 627 365 644 b;787 11 349 382 262 391 b;807 11 279 347 279 400 b;823 8 285 295 262 332 r;840 16 297 402 297 444 r;859 12 357 406 322 413 b;880 20 361 493 357 530 r;904 16 487 520 479 557 r
930 20 479 524 475 629 b;958 17 483 489 423 526 r;980 16 491 497 409 503 r;1001 11 444 486 444 557 b;1020 11 435 450 396 452 b;1037 11 349 433 340 434 b;1053 7 254 355 254 359 b;1068 11 258 378 237 391 r;1087 11 357 382 314 419 b;1101 12 353 505 349 518 r
1118 12 491 497 435 530 r;1134 16 491 532 466 578 r;1156 12 534 654 514 656 r;1175 16 574 650 561 650 b;1194 12 569 592 561 687 r;1208 6 462 588 462 625 b;1221 11 475 489 357 503 r;1234 7 479 493 462 530 b;1248 7 483 497 448 557 r;1260 7 491 584 483 590 r
1277 16 586 879 574 879 r;1303 20 815 875 790 997 b;1327 16 815 822 763 885 b;1350 16 811 1009 807 1023 r;1372 14 912 1005 904 1054 b;1391 11 916 951 881 963 r;1410 12 953 1018 941 1083 r;1426 6 1007 1013 945 1050 b;1438 10 937 1005 869 1050 b
1455 11 720 935 716 935 b;1474 16 724 774 660 846 r;1495 11 767 908 728 916 r;1517 14 807 904 798 928 b;1541 12 803 879 786 881 r;1559 17 881 955 842 963 r`),
  ...candles(S4b, `15 16 825 951 782 953 b;34 11 747 823 728 858 b;51 11 677 753 673 786 b;70 16 691 730 687 739 r;91 16 734 765 720 798 r;110 16 644 761 625 763 b;129 11 621 640 617 695 b;148 11 592 625 547 652 b;167 16 586 619 538 629 r;186 12 613 619 557 673 r
203 11 574 615 561 633 b;218 8 569 635 547 648 r;231 7 596 640 574 652 b;243 6 596 602 569 617 b;258 11 538 602 522 609 b;269 7 435 536 427 547 b;284 8 431 481 404 503 r;296 12 483 549 452 578 r;315 12 543 627 534 644 r;331 12 621 635 561 652 r
346 7 547 623 538 625 b;360 7 543 602 522 609 r;372 6 538 598 534 609 b;383 7 553 567 514 567 r;396 7 561 605 547 629 r;409 12 609 627 596 716 r;422 7 617 623 557 633 b;436 8 613 722 609 739 r;450 12 724 856 712 873 r;464 11 850 887 763 887 r
483 11 815 883 782 902 b;501 11 821 827 792 877 r;519 16 829 982 794 984 r;540 16 953 986 937 1046 b;559 10 834 951 834 953 b;576 11 739 840 687 854 b;593 12 743 836 730 846 r;609 11 782 831 755 877 b;628 17 786 887 782 953 r;647 12 889 939 842 945 r
664 11 794 961 782 963 b;683 16 798 852 728 873 r;704 11 772 856 755 885 b;723 12 759 784 720 815 r;740 12 786 788 724 811 b;754 8 794 860 747 889 r;766 7 815 856 755 858 b;778 7 821 854 782 864 r;790 7 842 856 794 916 b;802 7 834 840 825 862 b
816 8 829 864 815 881 r;828 8 869 961 854 961 r;840 6 933 955 921 967 b;852 6 924 939 906 1011 b;864 6 911 913 906 935 b;876 7 906 933 902 953 r;887 6 928 943 906 943 b;899 6 906 935 902 947 b;911 6 902 913 900 935 b;923 7 897 908 885 924 r
937 7 902 951 897 976 r;949 6 928 951 920 951 b;961 6 864 926 850 933 b;973 7 869 947 850 949 r;985 7 941 978 941 997 r;996 7 829 848 829 848 r;1009 7 869 1021 869 1054 r;1020 7 984 1164 984 1178 r;1033 7 1149 1263 1149 1304 r;1046 6 1244 1259 1244 1292 b
1059 7 1240 1259 1240 1339 r;1070 6 1213 1263 1213 1283 b;1082 6 1205 1219 1141 1256 b;1094 6 1211 1213 1174 1248 b;1106 7 1213 1333 1210 1343 r;1117 6 1296 1329 1236 1329 b;1130 6 1229 1302 1217 1304 b;1142 6 1221 1242 1217 1244 b
1154 7 1217 1263 1210 1263 r;1167 7 1235 1254 1230 1271 r;1180 6 1248 1273 1244 1283 b;1192 7 1252 1285 1240 1287 r;1204 6 1248 1281 1244 1283 b;1216 6 1079 1246 1063 1246 b;1228 6 1067 1096 1067 1106 b;1239 7 1054 1085 1054 1102 r
1251 6 1007 1104 950 1104 b;1263 6 1011 1013 1007 1067 b;1277 6 877 1009 869 1023 b;1289 6 811 875 759 875 b;1301 6 794 817 747 821 b;1313 7 778 831 778 902 r`),
];

/* volume bars: left, right, top */
const volumes = [
  [S4, "24,40,1155 43,74,1201 77,109,1203 112,143,1199 145,176,1209 178,209,1190 211,242,1232 245,271,1256 273,297,1285 299,328,1250 330,356,1289 359,378,1310 380,409,1252 411,437,1275 440,461,1327 463,487,1281 489,508,1347 511,523,1384 525,535,1424 537,551,1380 553,564,1402 566,577,1395 579,590,1395 592,602,1424 604,615,1393 617,635,1347 637,649,1384 651,670,1347 672,694,1327 696,727,1219 729,755,1252 758,777,1345 779,796,1364 798,815,1355 817,827,1397 829,848,1333 850,865,1384 867,891,1292 893,915,1325 917,943,1259 946,967,1320 969,988,1337 991,1010,1355 1012,1027,1366 1029,1045,1366 1047,1057,1399 1059,1077,1353 1079,1093,1386 1095,1107,1389 1109,1122,1372 1124,1143,1347 1145,1162,1351 1164,1183,1343 1185,1200,1386 1202,1212,1403 1215,1226,1382 1228,1238,1397 1240,1252,1428 1254,1264,1424 1266,1288,1322 1290,1316,1273 1318,1335,1345 1338,1359,1322 1361,1380,1343 1383,1399,1360 1402,1418,1362 1421,1430,1409 1432,1444,1384 1446,1460,1382 1463,1485,1322 1487,1501,1360 1504,1528,1304 1530,1547,1353 1549,1567,1339"],
  [S4b, "1,24,1320 26,40,1380 43,57,1372 59,78,1343 80,99,1347 101,119,1347 121,138,1368 140,157,1366 159,176,1349 178,194,1360 196,209,1376 211,221,1401 223,234,1413 236,247,1417 249,261,1380 263,274,1397 276,288,1407 290,302,1382 304,321,1351 323,338,1376 340,351,1411 353,364,1419 366,376,1440 378,389,1428 391,402,1409 404,413,1382 415,427,1415 429,440,1407 442,456,1374 458,471,1386 473,489,1351 491,506,1376 508,527,1337 529,549,1335 551,565,1386 568,585,1362 587,600,1384 602,616,1374 618,637,1337 639,654,1386 656,670,1366 672,694,1325 696,714,1364 716,731,1366 733,746,1372 748,759,1415 761,771,1422 773,783,1455 785,795,1453 797,808,1469 810,821,1471 823,833,1473 835,846,1479 848,857,1473 859,870,1489 872,881,1491 883,893,1498 895,905,1498 907,917,1498 919,928,1495 930,942,1485 944,955,1494 957,967,1492 969,979,1494 981,990,1496 1004,1014,1499 1016,1026,1499 1028,1038,1494 1040,1050,1485 1052,1063,1461 1065,1075,1500 1077,1087,1494 1089,1099,1483 1101,1111,1489 1113,1122,1477 1125,1135,1501 1137,1147,1500 1149,1160,1499 1162,1173,1499 1175,1185,1500 1282,1292,1471"],
];
const outer = "192:33 215:37 230:52 240:75 255:120 262:140 275:162 290:210 300:225 310:240 318:235 325:246 333:225 345:225 352:262 360:283 367:260 373:232 390:228 395:190 400:175 405:188 412:192 418:180 423:205 435:220 442:247 450:262 457:225 463:300 475:350 487:380 493:360 500:372 508:345 515:350 523:310 530:330 537:420 545:450 553:480 560:490 570:480 578:500 585:560 593:575 600:590 607:592 613:560 618:520 627:490 633:420 640:370 648:350 655:300 663:250 672:230 680:220 687:265 695:250 703:235 710:205 720:230 727:270 735:312 742:275 748:283 757:300 767:350 778:380 787:400 797:440 803:478 812:480 820:510 832:545 843:575 850:520 858:500 868:510 877:440 885:400 893:410 900:440 907:480 915:470 922:430 930:400 940:410 947:405 955:380 963:350 972:330 980:300 990:290 1000:265 1010:250 1020:240 1030:215 1043:180 1055:165 1070:160 1085:135 1100:125 1115:115 1125:90 1140:65 1150:50 1165:40 1180:42 1195:47 1205:45 1215:57 1225:50 1240:65 1255:78 1265:65 1280:60 1295:42 1310:38 1325:32 1340:24";
const inner = "192:33 215:35 235:52 250:70 262:85 280:105 300:128 315:132 325:120 335:115 345:150 357:172 367:150 375:143 390:135 400:95 410:107 423:112 435:115 445:125 455:135 463:160 475:183 487:182 497:150 507:160 517:150 530:148 540:220 548:240 560:270 567:260 575:285 585:310 593:365 607:360 615:340 622:310 633:265 640:245 650:200 660:155 672:135 680:160 690:140 700:120 712:112 720:150 740:165 757:180 770:190 785:215 797:235 810:230 820:250 835:290 843:280 852:280 863:225 875:235 890:220 900:240 907:245 920:230 935:180 945:190 955:170 965:165 975:150 985:150 1000:130 1015:115 1035:100 1050:95 1070:75 1085:55 1095:50 1110:40 1130:40 1150:35 1340:32";
const pairsOf = (s) => s.split(" ").map((p) => p.split(":").map(Number));
const widthAt = (pts, y) => {
  for (let i = 1; i < pts.length; i++) if (y <= pts[i][0]) {
    const [y0, a] = pts[i - 1]; const [y1, b] = pts[i];
    return a + ((b - a) * (y - y0)) / (y1 - y0);
  }
  return 24;
};
const profile = (() => {
  const o = pairsOf(outer), n = pairsOf(inner), rows = [];
  for (let v = 193; v < 1340; v += 4.126) {
    const wo = widthAt(o, v), wi = Math.min(widthAt(n, v), wo);
    rows.push({ y: S4.y(v), a: S4.x(wi), b: S4.x(wo), core: v > 423 && v < 933 });
  }
  return rows;
})();

/* ---------- panels ---------- */
const DayPlot = () => {
  const s = S1, X = s.x, Y = s.y;
  return (
    <Plot viewBox="56 80 846 516">
      <Ground id="g1" x={56} y={80} w={846} h={516} axisX={847} axisY={570} />
      <clipPath id="c1"><rect x="58" y="82" width="789" height="488" /></clipPath>
      <g clipPath="url(#c1)">
        <path d={`M${X(135)} ${Y(1228)}Q${X(208)} ${Y(1358)} ${X(282)} ${Y(1228)}`} fill="#06201f" stroke="#5b3fb0" />
        <Box x1={X(208)} x2={X(505)} y1={Y(1344)} y2={Y(1391)} f="#232323" />
        <H x1={X(325)} x2={X(1447)} y={Y(1353)} w={2} c="#868686" d="10 12" />
        <H x1={X(497)} x2={X(1460)} y={Y(662)} w={2} c={C.dim} d="2 6" />
        <Candles data={day} />
        <H x1={X(135)} x2={847} y={Y(953)} w={2} c="#b55a5f" d="10 12" />
        <H x1={X(897)} x2={X(1455)} y={Y(441)} w={2} c={C.dot} d="2 6" />
        <H x1={X(683)} x2={X(1460)} y={Y(537)} w={2} c={C.dot} d="2 6" />
        <H x1={X(945)} x2={X(1460)} y={Y(960)} w={2} c={C.dot} d="2 6" />
        <Box x1={X(1004)} x2={X(1004) + 1} y1={Y(483)} y2={Y(576)} f="#fff" />
        <Box x1={X(165)} x2={X(1079)} y1={Y(1224)} y2={Y(1235)} f="#a03434" o="0.85" />
        <polyline points={poly(s, "282,918 549,1240")} stroke="#bdbdbd" fill="none" />
        <polyline points={poly(s, "282,1254 462,1470")} stroke="#bdbdbd" fill="none" />
        <circle cx={X(281)} cy={Y(1243)} r="5" fill="#4a2f08" stroke="#d98200" />
        <H x1={58} x2={X(135)} y={Y(1058)} w={2} c={C.orange} /><H x1={58} x2={X(170)} y={Y(1103)} w={2} c={C.orange} /><H x1={X(134)} x2={X(170)} y={Y(1093)} w={3} c={C.orange} />
        <Band x1={X(209)} x2={X(382)} y={Y(1102)} />
        <Band x1={X(325)} x2={X(440)} y={Y(1348)} />
        <H x1={X(440)} x2={X(497)} y={Y(1375)} c={C.orange} /><H x1={X(497)} x2={X(549)} y={Y(1248)} w={2} c={C.orange} />
        <H x1={X(549)} x2={X(588)} y={Y(1154)} c={C.orange} /><H x1={X(549)} x2={X(588)} y={Y(1175)} c={C.orange} />
        <H x1={58} x2={X(113)} y={Y(1189)} c={C.upEdge} />
        <g fill="none" stroke="#6b92c7" strokeWidth="2">
          <polyline points={poly(s, "728,1227 768,925 852,1215 896,925 1043,1470")} />
          <polyline points={poly(s, "1095,1470 1150,1152 1203,534 1258,930 1312,234")} />
          <polyline points={poly(s, "1185,560 1203,534 1220,570")} /><polyline points={poly(s, "1292,262 1312,234 1327,268")} />
        </g>
        <Arrow x={X(810)} y={77} c="#fff" /><Arrow x={X(810)} y={127} c="#fff" /><Arrow x={X(897)} y={123} c="#f00" /><Arrow x={X(853)} y={317} c="#f00" />
        <Arrow x={X(1003)} y={416} c="#fff" /><Arrow x={56} y={351} c="#f00" /><CyanArrow x={X(281)} y={363} />
        <Note $a="middle" $c="#fff" x={X(810)} y={104}>L7</Note><Note $a="middle" x={X(810)} y={155}>Week L3</Note>
        <Note $a="middle" x={X(853)} y={345}>L4</Note><Note $a="middle" x={X(1003)} y={444}>Week L4</Note>
        <g transform="translate(170 378) rotate(34)"><Note $i $a="start" $s={15} $w={600} $c={C.up}>S1(day</Note></g>
        <H x1={58} x2={847} y={193} c="#9598a1" d="5 5" /><V x={699} y1={82} y2={570} c="#9598a1" d="5 5" />
        <Note x={X(1449)} y={235}>L6(day)</Note><Note x={X(1449)} y={267}>HH@527</Note><Note $s={11} $w={400} $c={C.teal} x={X(1446)} y={292}>L1</Note>
        <Note $s={11} $w={400} $c={C.down} x={X(1446)} y={387}>HH W top</Note><Note x={X(1449)} y={408}>Week SR</Note>
        <Note $a="middle" $s={8} x={X(1063)} y={495}>L2</Note><Note $s={13} $c="#fff" x={X(1446)} y={542}>W bottom</Note>
        <Note $a="start" $s={12} $w={600} $c="#fff" x={X(211)} y={535}>Cup And Handle（d）</Note>
      </g>
      <PriceTicks x={855} y={86} step={49} from={70000} by={1000} n={10} />
      <circle cx="837" cy="193" r="7" fill="#131722" stroke="#dbdbdb" /><path d="M834 193h7M837.500 190v7" stroke="#dbdbdb" />
      <AxisTag x={848} y={184} w={51} h={19} f="#363a45" lines={["67,836.3"]} />
      <AxisTag x={848} y={341} w={51} h={27} f={C.down} lines={["64,681.2", "17:50:00"]} />
      <TimeTicks s={s} y={582} src="11@170 14@281 19@440 22@588 27@683 6月@808 4@945 9@1126 17@1286 22@1365 25@1445" />
      <TimeTag x={667} y={570} w={64} a="6月 12 (金)" />
      <g fill="none" stroke="#b2b5be"><path d="M871 577h8l4 6-4 6h-8l-4-6z" /><circle cx="875" cy="583" r="2.500" /></g>
    </Plot>
  );
};

const HalfPlot = () => {
  const X = S2.x, Y = S2.y, XB = S2b.x;
  const beads = (a, b, y) => { const r = []; for (let x = a; x < b; x += 6.4) r.push(<circle key={x} cx={x} cy={y} r="3.500" />); return r; };
  return (
    <Plot viewBox="905 80 1607 516">
      <Ground id="g2" x={905} y={80} w={1607} h={516} axisX={2455} axisY={570} />
      <clipPath id="c2"><rect x="905" y="80" width="1550" height="490" /></clipPath>
      <g clipPath="url(#c2)">
        {[X(295), X(832), X(1368), XB(448)].map((x) => <V key={x} x={x} y1={80} y2={570} c="#1a2030" d="6 5" />)}
        <Box x1={905} x2={X(301)} y1={Y(183)} y2={Y(583)} f="#1d4a5a" o="0.13" />
        <Box x1={905} x2={X(301)} y1={Y(333)} y2={Y(461)} f="#26395b" />
        <Box x1={X(301)} x2={X(839)} y1={Y(342)} y2={Y(570)} f="#4a1218" o="0.25" />
        <Box x1={X(301)} x2={X(839)} y1={Y(342)} y2={Y(426)} f="#4d1c25" />
        <Box x1={905} x2={X(837)} y1={Y(708)} y2={Y(1212)} f="#463c3f" />
        <Box x1={X(837)} x2={X(1377)} y1={Y(417)} y2={Y(708)} f="#4b1b24" />
        <Box x1={X(837)} x2={X(1377)} y1={Y(708)} y2={Y(1212)} f="#75383e" />
        <Box x1={X(837)} x2={X(1377)} y1={Y(1212)} y2={Y(1286)} f="#0e0405" />
        <Box x1={905} x2={X(33)} y1={Y(183)} y2={Y(1286)} f="#ffd0d0" o="0.13" />
        <Box x1={1655} x2={1949} y1={Y(780)} y2={Y(1305)} f="#27405a" o="0.15" />
        <Box x1={1655} x2={1949} y1={Y(876)} y2={Y(1038)} f="#20334f" />
        <Box x1={1655} x2={1949} y1={Y(1038)} y2={Y(1210)} f="#2e4d78" />
        <Box x1={1949} x2={XB(992)} y1={Y(845)} y2={Y(858)} f="#1c0c12" />
        <Box x1={1949} x2={XB(992)} y1={Y(858)} y2={Y(1038)} f="#4a171d" />
        <Box x1={1949} x2={2455} y1={Y(1038)} y2={Y(1209)} f="#1b2a45" />
        <Box x1={1949} x2={XB(992)} y1={Y(1038)} y2={Y(1195)} f="#222b45" />
        <Box x1={XB(1258)} x2={XB(1273)} y1={Y(780)} y2={Y(1305)} f="#2a4a80" o="0.35" />
        <H x1={X(290)} x2={2455} y={Y(522)} w={2} c={C.dot} d="2 6" /><H x1={905} x2={2455} y={Y(660)} w={2} c={C.dot} d="2 6" />
        <H x1={905} x2={2455} y={Y(837)} w={2} c={C.dim} d="2 6" /><H x1={905} x2={2455} y={Y(876)} w={3} c={C.orange} d="3 9" />
        <H x1={905} x2={2455} y={Y(1248)} w={2} c="#b55a5f" d="10 12" /><H x1={X(731)} x2={2455} y={Y(1257)} w={2} c={C.dot} d="2 6" />
        <g fill="#ebe4e4">{beads(908, X(837), Y(709))}</g><g fill="#e5adb4">{beads(X(840), X(1368), Y(709))}</g>
        <g fill="#c3d2ea">{beads(X(1376), 1949, Y(1210))}</g><g fill="#e6e6e6">{beads(1950, XB(575), Y(1210))}</g>
        <Note $a="start" $s={12} $w={400} $c="#8e24aa" x={X(194)} y={238}>20SMA/4H</Note>
        <Candles data={half} theme="night" />
        {[[324, 849, 361], [194, 382, 512], [687, 931, 579], [814, 942, 609], [1317, 1445, 1113]].map((b) => (
          <Band key={b[0]} x1={X(b[0])} x2={X(b[1])} y={Y(b[2])} />
        ))}
        <g stroke="#c9a6ab"><polyline points={poly(S2, "970,706 1257,585")} /><polyline points={poly(S2, "970,712 1257,592")} /></g>
        <polyline points={poly(S2, "0,1355 200,1470")} stroke="#6b92c7" strokeWidth="2" /><polyline points={poly(S2b, "1063,1470 1380,1226")} stroke="#6b92c7" strokeWidth="2" />
        <Note $a="start" $s={12} $w={700} $c="#e6e6e6" x={X(725)} y={187}>Nas100 RS</Note><CyanArrow x={X(802)} y={168} />
        <Arrow x={X(1304)} y={522} c="#fff" /><Note $a="middle" x={X(1304)} y={550}>Week L4</Note>
        <H x1={905} x2={2455} y={206} c="#9598a1" d="5 5" /><V x={2454} y1={80} y2={570} c="#9598a1" d="7 5" />
        <Note x={2449} y={262}>L6(day)</Note><Note x={2449} y={308}>HH@527</Note><Note $s={11} $w={400} $c={C.teal} x={2447} y={350}>L1</Note>
        <Note $s={11} $w={400} $c={C.down} x={2448} y={487}>HH W top</Note><Note x={2449} y={507}>Week SR</Note>
        <Flash x={2013} y={558} />
      </g>
      <PriceTicks x={2463} y={83} step={27.82} from={69600} by={400} n={18} />
      <AxisTag x={2456} y={197} w={51} h={19} f="#363a45" lines={["67,836.3"]} />
      <AxisTag x={2456} y={365} w={51} h={15} f={C.orange} c="#1a1a1a" lines={["65,453.7"]} />
      <AxisTag x={2456} y={419} w={51} h={27} f={C.up} lines={["64,681.2", "19:59"]} />
      <TimeTicks s={S2} y={582} src="18:00@18 4@158 07:00@299 12:00@416 18:00@557 5@697 07:00@837 12:00@953 18:00@1094 6@1233 8@1374 12:00@1491" />
      <TimeTicks s={S2b} y={582} src="18:00@172 9@313 07:00@452 12:00@570 18:00@710 10@850 06:00@990 12:00@1130" />
      <TimeTag x={2357} y={570} w={98} a="6月 10 (水)" b="22:30" />
    </Plot>
  );
};

const TenPlot = () => {
  const Y = S3.y, XB = S3b.x;
  const split = XB(338);
  return (
    <Plot viewBox="56 598 1192 760">
      <Ground id="g3" x={56} y={598} w={1192} h={760} axisX={1193} axisY={1333} />
      <Box x1={56} x2={XB(347)} y1={Y(455)} y2={Y(1102)} f="#1c2a43" />
      <Box x1={XB(345)} x2={1193} y1={Y(419)} y2={Y(765)} f="#3b1e28" />
      <Box x1={S3.x(314)} x2={S3.x(345)} y1={Y(270)} y2={Y(1285)} f="#3a6aad" o="0.24" />
      <H x1={56} x2={1193} y={Y(35)} w={2} c={C.dot} d="2 6" /><H x1={56} x2={1193} y={Y(377)} w={2} c={C.dim} d="2 6" />
      <g>{ten.map((c) => <Cross key={c.cx} x={c.cx} y={Y(127)} r={4} w={3} c="#7e6ba0" />)}</g>
      <g>{ten.map((c) => <Cross key={c.cx} x={c.cx} y={Y(1102)} r={3} w={2} c={c.cx < split ? "#e0903a" : "#a8a8a8"} />)}</g>
      <g>{ten.filter((c) => c.cx > split).map((c) => <Cross key={c.cx} x={c.cx} y={Y(419)} r={3} w={2} c="#b5651d" />)}</g>
      <g>{ten.map((c) => <Cross key={c.cx} x={c.cx} y={Y(1249)} r={1.5} w={1} c={C.down} />)}</g>
      <H x1={56} x2={1193} y={Y(1174)} w={2} c="#b55a5f" d="10 12" /><H x1={56} x2={1193} y={Y(1190)} w={2} c={C.dot} d="2 6" />
      <H x1={56} x2={621} y={Y(948)} c="#c62f3d" />
      <polyline points={poly(S3b, "0,948 329,948 345,896 464,896 477,834 494,834 511,842 542,842 582,851 621,854 657,854 692,862 726,860 800,864 836,857 910,852 940,851 969,855 998,852 1062,853 1079,851 1135,851")} fill="none" stroke="#b52f3c" />
      <Candles data={ten} />
      <H x1={56} x2={1193} y={Y(453)} w={3} c={C.orange} d="3 9" />
      <V x={XB(335)} y1={598} y2={Y(1503)} c="#3d7be0" d="6 4" />
      <Note x={1186} y={625}>HH@527</Note><Note $s={11} $w={400} $c={C.teal} x={1184} y={774}>L1</Note>
      <Note $s={11} $w={400} $c={C.down} x={1185} y={1160}>HH W top</Note><Note x={1186} y={1185}>Week SR</Note>
      <Tag x2={1192} y={654} w={58} f="#b39ddb" c="#1a1a1a">MN :mn_op</Tag>
      <Tag x2={1192} y={1005} w={92} f={C.down} c="#fff">MA:Smoothing Line</Tag>
      <Tag x2={1192} y={1127} w={61} f="#fff" c="#1a1a1a">week :w_op</Tag>
      <Tag x2={1192} y={1198} w={48} f={C.down} c="#fff">week :LL</Tag>
      <V x={1189} y1={598} y2={1333} c="#9598a1" d="6 5" />
      <Flash x={1075} y={1320} />
      <PriceTicks x={1200} y={633} step={39.18} from={66400} by={200} n={18} />
      <AxisTag x={1193} y={813} w={51} h={15} f={C.orange} c="#1a1a1a" lines={["65,453.7"]} />
      <AxisTag x={1193} y={964} w={51} h={27} f={C.up} lines={["64,681.2", "09:59"]} />
      <TimeTicks s={S3} y={1345} src="17:00@224 18:00@329 19:00@428 20:00@526 21:00@642 22:00@733 23:00@930 9@1126 01:00@1272 02:00@1400" />
      <TimeTicks s={S3b} y={1345} src="03:00@26 04:00@128 05:00@254 07:00@345 08:00@433 09:00@541 10:00@762 11:00@969 12:00@1099" />
      <TimeTag x={1094} y={1333} w={98} a="6月 09 (火)" b="14:50" />
      <g transform="translate(68 1303) scale(0.85)" fill="#dbdbdb"><path d="M0 1h14v17H7V8H0z" /><circle cx="19" cy="4.500" r="3.700" /><path d="M27 1h8l-8 17h-8z" /></g>
    </Plot>
  );
};

const ThreePlot = () => {
  const X = S4.x, Y = S4.y, XB = S4b.x;
  const grey = "1020,956 1032,1022 1046,1070 1058,1103 1070,1123 1082,1134 1094,1142 1106,1154 1117,1168 1130,1176 1142,1181 1154,1185 1167,1189 1180,1192 1192,1197 1204,1202 1228,1193 1239,1187 1251,1181 1263,1175 1277,1165 1289,1152";
  const blue = "1032,1127 1046,1171 1058,1214 1094,1211 1118,1230 1167,1233 1180,1235 1192,1237 1204,1237 1228,1227 1239,1222 1251,1219 1263,1212 1277,1199 1289,1165 1301,1156";
  return (
    <Plot viewBox="1250 598 1262 760">
      <Ground id="g4" x={1250} y={598} w={1262} h={760} axisX={2455} axisY={1333} />
      <clipPath id="c4"><rect x="1250" y="598" width="1205" height="735" /></clipPath>
      <g clipPath="url(#c4)">
        <H x1={1250} x2={2455} y={Y(650)} w={2} c={C.dim} d="2 6" />
        <g shapeRendering="crispEdges" fill="#1c40ae">
          {volumes.map(([s, src]) => src.split(" ").map((v) => { const [a, b, t] = v.split(",").map(Number); return <rect key={v} x={s.x(a)} y={s.y(t)} width={Math.max(1, s.x(b) - s.x(a))} height={1333 - s.y(t)} />; }))}
        </g>
        <g fill="none" stroke="#43a047">
          <polyline points={poly(S4, "524,1510 557,1470 580,1440 600,1400 625,1362 655,1327 684,1296 710,1285 742,1270 765,1256 787,1242 806,1210 838,1185 878,1161 903,1139 930,1129 958,1117 1001,1098 1017,1077 1050,1050 1086,1028 1101,1010 1134,996 1175,983 1210,960 1250,937 1260,925 1350,923 1440,927 1460,920 1515,914 1568,911")} />
          <polyline points={poly(S4b, "0,912 70,905 120,895 165,880 190,870 243,853 255,845 285,831 315,823 330,818 380,802 400,792 420,788 450,788 470,792 500,793 540,799 600,803 650,809 700,810 750,808 820,813 860,820 900,824 940,830 973,832 1000,842 1015,845 1033,857 1046,869 1065,878 1092,891 1104,906 1130,919 1155,934 1165,944 1190,953 1215,962 1225,964 1262,965")} />
        </g>
        <Candles data={three} />
        <g shapeRendering="crispEdges">
          {profile.map((r) => (
            <g key={r.y} opacity={r.core ? 1 : 0.5}>
              <rect x="1250" y={r.y} width={Math.max(0, r.a - 1250)} height="2" fill="#4caf50" opacity="0.4" />
              <rect x={r.a} y={r.y} width={Math.max(0, r.b - r.a)} height="2" fill="#e9407a" opacity="0.42" />
            </g>
          ))}
        </g>
        <H x1={1250} x2={2455} y={Y(592)} w={2} c="#4caf50" d="10 12" />
        <H x1={1250} x2={X(55)} y={Y(232)} c="#0a0a0a" /><H x1={1250} x2={X(410)} y={Y(568)} c="#0a0a0a" /><H x1={1250} x2={X(430)} y={Y(903)} c="#0a0a0a" />
        <H x1={X(77)} x2={X(1365)} y={Y(964)} c="#f5e663" d="6 3" /><V x={X(77)} y1={Y(976)} y2={1333} c="#f5e663" d="5 4" />
        <H x1={X(115)} x2={X(140)} y={Y(957)} c="#f5e663" d="4 3" />
        <H x1={1250} x2={2455} y={Y(974)} w={3} c={C.orange} d="3 9" />
        <g fill="none" stroke="#e6d93a">
          <polyline points={poly(S4, "24,1134 58,1143 92,1185 127,1201 160,1203 194,1200 227,1211 257,1225 286,1258 315,1265 343,1275 369,1283 396,1283 424,1279 450,1284 476,1296 498,1320 517,1338 530,1385 545,1395 559,1402 572,1391 585,1397 597,1406 609,1405 626,1388 645,1372 661,1360 685,1352 711,1297 742,1267 768,1273 787,1322 807,1355 823,1371 840,1361 859,1371 880,1337 904,1333 930,1292 958,1299 980,1304 1001,1337 1020,1352 1037,1363 1053,1377 1068,1374 1087,1380 1101,1376 1118,1382 1134,1370 1156,1357 1175,1349 1194,1363 1208,1377 1221,1391 1234,1395 1248,1402 1260,1415 1277,1389 1303,1338 1327,1312 1350,1314 1372,1337 1391,1341 1410,1354 1426,1378 1438,1387 1455,1392 1474,1364 1495,1353 1517,1329 1541,1337 1568,1333")} />
          <polyline points={poly(S4b, "0,1333 15,1337 34,1347 51,1358 70,1364 91,1353 110,1347 148,1361 203,1361 220,1387 243,1410 270,1397 296,1395 315,1378 331,1371 346,1384 360,1407 372,1423 383,1428 396,1422 409,1405 445,1403 464,1391 483,1370 501,1370 519,1353 540,1349 559,1352 576,1361 593,1376 609,1374 628,1366 664,1366 704,1353 723,1351 740,1367 754,1389 766,1407 778,1430 790,1443 802,1461 816,1464 828,1470 852,1476 876,1483 887,1491 911,1497 937,1492 973,1495 1000,1499 1021,1499 1046,1487 1059,1478 1070,1480 1082,1485 1094,1492 1106,1487 1117,1482 1130,1488 1154,1499 1200,1500")} />
        </g>
        {grey.split(" ").map((p) => { const [a, b] = p.split(","); return <Cross key={p} x={XB(+a)} y={Y(+b)} r={1.5} w={1} c="#46586e" />; })}
        {blue.split(" ").map((p) => { const [a, b] = p.split(","); return <Cross key={p} x={XB(+a)} y={Y(+b)} r={1.5} w={1} c={C.up} />; })}
        <V x={XB(990)} y1={598} y2={1333} c="#3d6fc8" d="6 4" />
        <Note $s={11} $w={400} $c={C.teal} x={XB(1300)} y={906}>L1</Note>
        <Tag x2={2454} y={1058} w={25} f="#000" c="#4caf50" st="#4caf50">EMA</Tag>
        <Tag x2={2454} y={1142} w={31} f="#000" c={C.up} st={C.up}>VWAP</Tag>
        <Tag x2={2454} y={1318} w={55} f="#000" c={C.yellow} st={C.yellow}>Volume MA</Tag>
      </g>
      <PriceTicks x={2463} y={614} step={33.59} from={66000} by={40} n={22} />
      <AxisTag x={2456} y={1000} w={50} h={14} f="#000" c={C.down} st={C.down} lines={["65,533.7"]} />
      <AxisTag x={2456} y={1066} w={51} h={15} f={C.orange} c="#1a1a1a" lines={["65,453.7"]} />
      <TimeTicks s={S4} y={1345} src="23:30@313 9@543 00:30@711 01:00@930 01:30@1116 02:00@1277 02:30@1473" />
      <TimeTicks s={S4b} y={1345} src="03:00@110 03:30@269 04:00@408 04:30@576 05:00@754 05:30@875 07:00@996" />
      <TimeTag x={2358} y={1333} w={97} a="6月 09 (火)" b="08:21" />
    </Plot>
  );
};

const ChartPanel = ({ on, title, vol, volColor, bold, count, sync, top, children }) => (
  <Panel $on={on} aria-label={title}>
    {children}
    <Legend $t={top}>
      <LegendRow>
        <Coin $bg="#1e5288">225</Coin><Title>{title}</Title>
        <svg width="13" height="12" viewBox="0 0 13 12" aria-hidden="true"><path d="M0 0h13L9 6l4 6H0z" fill="#2979ff" /></svg>
        <Live /><Vol $c={volColor} $bold={bold}>出来高<b>{vol}</b></Vol>
      </LegendRow>
      {count && (
        <LegendRow>
          <Count><Icon n="chevron" s={18} w={2} />{count}</Count>
          {sync && <Sync><svg width="14" height="14" viewBox="0 0 14 14" fill="none" stroke="currentColor" strokeWidth="1.500"><path d="M2.500 6a5 5 0 0 1 9-1.500M11.500 8a5 5 0 0 1-9 1.500M11.500 1.500v3h-3M2.500 12.500v-3h3" /></svg></Sync>}
        </LegendRow>
      )}
    </Legend>
  </Panel>
);

const leftTools = [["cross", "十字線", "on"], ["trend", "トレンドライン"], ["fib", "フィボナッチ"], ["pattern", "パターン"], ["proj", "予測"], ["brush", "ブラシ"], ["text", "テキスト"], ["heart", "アイコン"], null, ["ruler", "計測"], ["zoomin", "ズーム"], null, ["magnet", "マグネット"], ["pencillock", "描画モード維持"], ["lock", "ロック"], ["eye", "表示"], ["link", "同期", "lit"], null, ["trash", "削除"]];

export default function App() {
  return (
    <Page>
      <Global />
      <Tabs>
        {tabs.map(([name, pct, up, icon], i) => (
          <Tab key={name} $on={!i}>
            <TabLink href={`#${name}`}>{icon}<span>{name}</span><Tri $up={up} /><Pct $up={up}>{pct}</Pct></TabLink>
            {i > 0 && <StripBtn $w={20} aria-label={`${name} を閉じる`}><Icon n="close" s={18} w={1.6} /></StripBtn>}
          </Tab>
        ))}
        <StripBtn $w={32} $c="#8c8c8c" aria-label="新しいタブ"><Icon n="plus" s={22} /></StripBtn>
        <Spacer />
        <StripBtn $c="#8c8c8c" aria-label="モニター"><Icon n="monitor" s={26} /></StripBtn>
        <StripBtn $c="#a8a8a8" aria-label="メニュー"><Icon n="dots3" s={22} /></StripBtn>
        <StripBtn aria-label="最小化"><Icon n="minus" s={22} /></StripBtn>
        <StripBtn aria-label="元に戻す"><Icon n="restore" s={22} w={1.6} /></StripBtn>
        <StripBtn aria-label="終了"><Icon n="exit" s={22} /></StripBtn>
      </Tabs>

      <Bar>
        <Avatar><Badge $t={2} $r={7}>10</Badge></Avatar>
        <Symbol>JP225YJPY<span><svg width="18" height="18" viewBox="0 0 18 18" fill="none" stroke="#dbdbdb"><path d="M4 3h10l3 5-8 8-8-8z" /><path d="M9 6v6M7 9h4" /></svg></span></Symbol>
        <Tool $w={46} aria-label="追加"><Icon n="pluscircle" s={26} /></Tool><Sep $m={4} />
        <Intervals>
          {["15秒", "2分", "10分", "30分", "1時間", "4時間", "日", "週", "月", "3分"].map((t) => <Tool key={t} $p={4} $on={t === "日"}>{t}</Tool>)}
        </Intervals>
        <Tool $w={30} aria-label="時間足"><Icon n="chevron" s={24} /></Tool><Sep $m={3} />
        <Tool $w={40} aria-label="バー"><Icon n="bars" /></Tool>
        <Tool $w={34} $on aria-label="ローソク足"><Icon n="candle2" /></Tool>
        <Tool $w={24} aria-label="チャートタイプ"><Icon n="chevron" s={24} /></Tool><Sep $m={3} />
        <Tool $p={8}><Icon n="indicator" />インジケーター</Tool>
        <Tool $w={30} aria-label="お気に入り"><Icon n="chevron" s={24} /></Tool>
        <Tool $w={34} aria-label="テンプレート"><Icon n="grid" s={24} /></Tool>
        <Rounds>{["0", "2", "4", "D", "M", "W", "F", "P", "O", "C", "個", "V", "Z"].map((t) => <Round key={t}>{t}</Round>)}</Rounds>
        <Sep $m={6} />
        <Tool $p={4}><Icon n="alert" />アラート</Tool>
        <Tool $p={14}><Icon n="rewind" s={24} />リプレイ</Tool>
        <Tool aria-label="リプレイ設定"><Icon n="chevron" s={22} /></Tool><Sep $m={4} />
        <Tool $w={38} aria-label="取り消す"><Icon n="undo" s={24} /></Tool><Tool $w={38} $c="#6b6b6b" aria-label="やり直す"><Icon n="redo" s={24} /></Tool>
        <Spacer />
        <Tool $w={38} aria-label="レイアウト"><Icon n="layout" s={26} /></Tool>
        <Saved>JP225<small>保存</small></Saved>
        <Tool $w={28} aria-label="レイアウト一覧"><Icon n="chevron" s={24} /></Tool>
        <Round>J</Round><Sep $m={10} />
        <Tool $w={34} aria-label="クイック検索"><Icon n="flashsearch" s={24} /></Tool>
        <Tool $w={42} aria-label="設定"><Icon n="hex" s={24} /></Tool>
        <Tool $w={34} aria-label="全画面"><Icon n="full" s={26} /></Tool>
        <Tool $w={40} aria-label="スナップショット"><Icon n="camera" s={26} /></Tool>
        <Trade><button><Disc><TvLogo w={12} color="#0f0f0f" /></Disc>トレード</button><button aria-label="ブローカー"><Icon n="chevron" s={22} /></button></Trade>
        <Post>投稿</Post>
      </Bar>

      <Body>
        <Side $pad="7px 0 20px">
          {leftTools.map((t, i) => (t ? <SideBtn key={i} $on={t[2] === "on"} $lit={t[2] === "lit"} aria-label={t[1]}><span><Icon n={t[0]} /></span></SideBtn> : <SideLine key={i} />))}
          <Spacer />
          <SideBtn $lit aria-label="お気に入り"><span><Icon n="star" /></span></SideBtn>
        </Side>
        <Center>
          <Charts>
            <Row $cols="846fr 1607fr" $gap={3}>
              <ChartPanel on title="JP225YJPY · 1日 · OANDA" vol="57.81K" volColor={C.down} top={6}><DayPlot /></ChartPanel>
              <ChartPanel title="JP225YJPY · 30 · OANDA" vol="1.76K" volColor="#f2f2f2" bold count="7" sync top={5}><HalfPlot /></ChartPanel>
            </Row>
            <Row $cols="1192fr 1262fr" $gap={2}>
              <ChartPanel title="JP225YJPY · 10 · OANDA" vol="1" volColor={C.upEdge} count="6" sync top={5}><TenPlot /></ChartPanel>
              <ChartPanel title="JP225YJPY · 3 · OANDA" vol="55" volColor={C.down} count="7" top={5}><ThreePlot /></ChartPanel>
            </Row>
          </Charts>
          <Footer $h={37}>
            <Ranges>{["1日", "5日", "1ヶ月", "3ヶ月", "6ヶ月", "年初来", "1年", "5年", "すべて"].map((t) => <button key={t}>{t}</button>)}</Ranges>
            <Sep $m={4} /><Tool $w={36} aria-label="日付へ移動"><Icon n="goto" s={26} /></Tool>
            <Spacer /><button>12:10:00 UTC+9</button><Sep $m={10} /><Tool aria-label="最大化"><Icon n="expand" s={26} /></Tool>
          </Footer>
          <Footer $h={38}>
            <Paper><PaperLogo><TvLogo w={15} color="#fff" /></PaperLogo>ペーパートレード</Paper>
            <Spacer /><Tool $w={40} aria-label="開く"><Icon n="chevup" s={22} w={1.6} /></Tool><Tool $w={32} aria-label="パネルを最大化"><Icon n="expand" /></Tool>
          </Footer>
        </Center>
        <Side $pad="1px 0 0">
          {[["list", "ウォッチリスト"], ["clock", "アラート"], ["layers", "オブジェクトツリー"], ["chat", "チャット"]].map(([n, l]) => <SideBtn key={n} $h={46} aria-label={l}><span><Icon n={n} s={28} /></span>{n === "clock" && <Badge $t={5} $r={-3}>61</Badge>}</SideBtn>)}
          <Spacer />
          {[["radar", "スクリーナー"], ["peak", "アイデア"], ["calendar", "カレンダー"], ["feed", "ニュース"], ["bell", "通知"]].map(([n, l]) => <SideBtn key={n} $h={45} aria-label={l}><span><Icon n={n} s={28} /></span></SideBtn>)}
          <SideBtn $h={48} $lit $disc aria-label="アプリ"><span><svg width="18" height="18" viewBox="0 0 18 18" aria-hidden="true">{[0, 7, 14].map((x) => [0, 7, 14].map((y) => <rect key={`${x}${y}`} x={x} y={y} width="4" height="4" rx="1" />))}</svg></span></SideBtn>
          <SideLine $m={4} />
          <SideBtn $h={48} aria-label="ヘルプ"><span><Icon n="help" s={30} /></span></SideBtn>
        </Side>
      </Body>

      <Float>
        <Grip />
        {["hray", "line2", "rotbox", "channel", "up", "note", "rect", "table", "down", "hrange", "proj", "vrange", "zig", "fib", "pin", "shortp", "text"].map((n) => <button key={n} aria-label={n}><Icon n={n} s={24} w={1.4} /></button>)}
      </Float>
    </Page>
  );
}
